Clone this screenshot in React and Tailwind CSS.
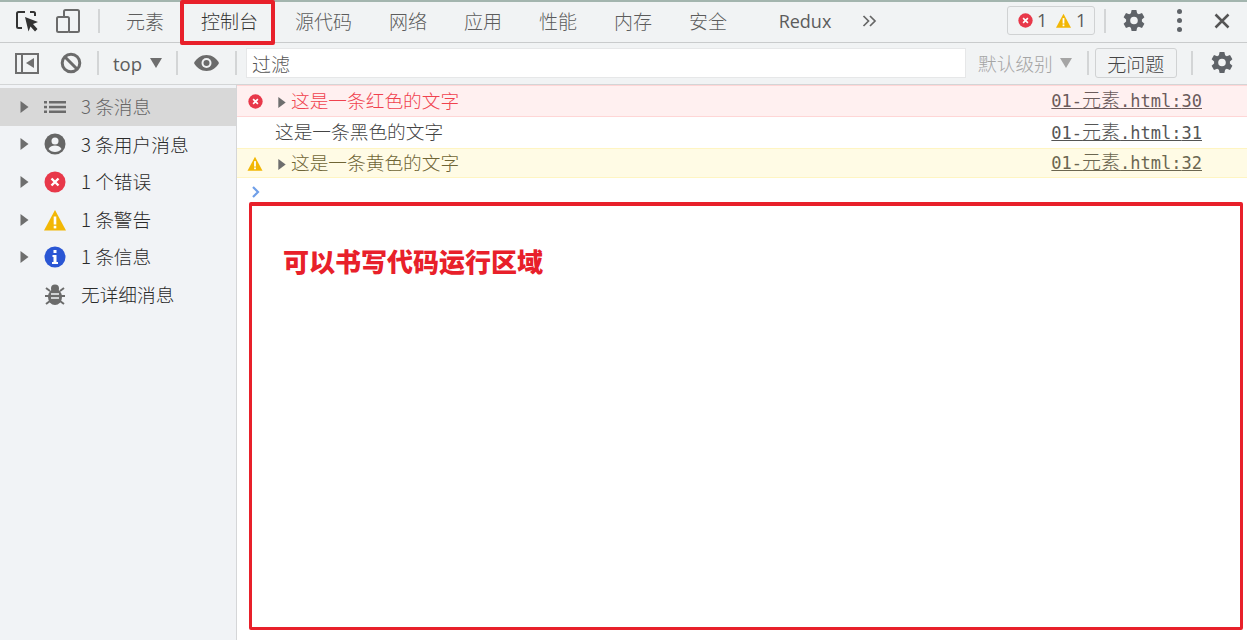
import React from "react";

const SANS = '"Noto Sans CJK SC","Noto Sans",sans-serif';

const Gear = ({ size = 24, color = "#5f6368" }) => (
  <svg width={size} height={size} viewBox="0 0 24 24" fill={color}>
    <path fillRule="evenodd" d="M9.600 1h4.800l.7 3.300 1.700.9 3.200-1.100 2.400 4.200-2.500 2.200v2l2.500 2.200-2.400 4.200-3.200-1.100-1.700.9-.7 3.300H9.600l-.7-3.300-1.700-.9-3.200 1.100L1.600 14.700l2.500-2.200v-2L1.600 8.300 4 4.100l3.200 1.100 1.700-.9L9.600 1zM12 7.700a3.800 3.800 0 1 0 0 7.600 3.800 3.800 0 0 0 0-7.600z" />
  </svg>
);

const ErrorIcon = ({ size = 22 }) => (
  <svg width={size} height={size} viewBox="0 0 22 22">
    <circle cx="11" cy="11" r="10.500" fill="#e8384a" />
    <path d="M7.500 7.500l7 7M14.500 7.500l-7 7" stroke="#fff" strokeWidth="2.400" />
  </svg>
);

const WarnIcon = ({ w = 22, h = 22 }) => (
  <svg width={w} height={h} viewBox="0 0 22 22">
    <path d="M11 1L22 21.500H0z" fill="#f2b705" />
    <rect x="9.700" y="7.500" width="2.600" height="8" fill="#fff" />
    <rect x="9.700" y="16.800" width="2.600" height="2.600" fill="#fff" />
  </svg>
);

const Caret = ({ color = "#6e6e6e", w = 8, h = 12 }) => (
  <svg width={w} height={h} viewBox="0 0 8 12"><path d="M0 0l8 6-8 6z" fill={color} /></svg>
);

const Down = ({ color = "#6e6e6e" }) => (
  <svg width="12" height="10" viewBox="0 0 12 10"><path d="M0 0h12L6 10z" fill={color} /></svg>
);

const Divider = ({ className = "" }) => <div className={`w-[2px] h-[24px] bg-[#d3d5d6] shrink-0 ${className}`} />;

const tabs = ["元素", "控制台", "源代码", "网络", "应用", "性能", "内存", "安全"];

const sideItems = [
  { label: "3 条消息", icon: "list", active: true },
  { label: "3 条用户消息", icon: "user" },
  { label: "1 个错误", icon: "error" },
  { label: "1 条警告", icon: "warn" },
  { label: "1 条信息", icon: "info" },
  { label: "无详细消息", icon: "bug", noCaret: true },
];

function SideIcon({ type }) {
  if (type === "list")
    return (
      <svg width="22" height="14" viewBox="0 0 22 14" fill="#6b6b6b">
        <rect x="0" y="1" width="3" height="2.500" /><rect x="5" y="1" width="17" height="2.500" />
        <rect x="0" y="5.800" width="3" height="2.500" /><rect x="5" y="5.800" width="17" height="2.500" />
        <rect x="0" y="10.500" width="3" height="2.500" /><rect x="5" y="10.500" width="17" height="2.500" />
      </svg>
    );
  if (type === "user")
    return (
      <svg width="22" height="22" viewBox="0 0 22 22">
        <circle cx="11" cy="11" r="10.500" fill="#666" />
        <circle cx="11" cy="8" r="3.500" fill="#f1f3f6" />
        <path d="M4.500 16c1.500-2.800 4-3.500 6.500-3.500s5 .7 6.500 3.500c-1.500 2-4 3-6.500 3s-5-1-6.500-3z" fill="#f1f3f6" />
      </svg>
    );
  if (type === "error") return <ErrorIcon />;
  if (type === "warn") return <WarnIcon />;
  if (type === "info")
    return (
      <svg width="22" height="22" viewBox="0 0 22 22">
        <circle cx="11" cy="11" r="10.500" fill="#2a56d4" />
        <rect x="9.500" y="4" width="3" height="3" fill="#fff" />
        <path d="M8.500 9h4v7h1.500v2h-6v-2h1.500v-5h-1z" fill="#fff" />
      </svg>
    );
  return (
    <svg width="20" height="22" viewBox="0 0 20 22" fill="#6b6b6b">
      <ellipse cx="10" cy="13" rx="7" ry="8" />
      <circle cx="10" cy="4.500" r="4" />
      <path d="M1 4l4 3M19 4l-4 3M0 12h4M20 12h-4M1 20l4-3M19 20l-4-3" stroke="#6b6b6b" strokeWidth="2" />
      <path d="M6 10h8M6 14h8" stroke="#f1f3f6" strokeWidth="1.600" />
    </svg>
  );
}

function Row({ className, textClass, linkClass, text, file, icon, caret }) {
  return (
    <div className={`flex items-center pl-[7px] pr-[45px] shrink-0 ${className}`}>
      <div className="w-[22px] flex justify-center shrink-0">{icon}</div>
      {caret ? (
        <div className="ml-[11px] w-[14px] shrink-0 flex pl-[1px] pt-[2px]"><Caret w={8} h={11} /></div>
      ) : (
        <div className="w-[9px] shrink-0" />
      )}
      <span className={`flex-1 text-[18.700px] font-light leading-[24px] pb-[3px] ${textClass}`}>{text}</span>
      <span
        className={`underline text-[17px] leading-[24px] pb-[1px] ${linkClass}`}
        style={{ fontFamily: '"DejaVu Sans Mono","Noto Sans CJK SC",monospace' }}
      >
        01-<span className="text-[19px] font-light">元素</span>.html:{file}
      </span>
    </div>
  );
}

export default function App() {
  return (
    <div className="relative w-[1247px] h-[640px] overflow-hidden bg-white flex flex-col" style={{ fontFamily: SANS }}>
      {/* top bar */}
      <div className="h-[43px] shrink-0 flex items-center pb-[3px] bg-[#f1f3f4] border-t-[2px] border-t-[#a3b5ae] border-b border-b-[#c9cbcc] text-[#5c5c5c] text-[19px]">
        <div className="w-[39px] flex justify-end shrink-0">
          <svg width="24" height="24" viewBox="0 0 24 24" fill="none">
            <path d="M10 3H3.500A1.500 1.500 0 0 0 2 4.500v13A1.500 1.500 0 0 0 3.500 19H7" stroke="#333" strokeWidth="2" />
            <path d="M15 3h3.500A1.500 1.500 0 0 1 20 4.500V7" stroke="#333" strokeWidth="2" />
            <path d="M10 8l13 5-5 2 4.500 5-2.500 2.500-4.500-5-2 5z" fill="#333" />
          </svg>
        </div>
        <div className="w-[42px] flex justify-end shrink-0">
          <svg width="26" height="26" viewBox="0 0 26 26" fill="none" stroke="#6b6b6b" strokeWidth="2">
            <path d="M9 9V3.500A1.500 1.500 0 0 1 10.500 2h12A1.500 1.500 0 0 1 24 3.500v19a1.500 1.500 0 0 1-1.500 1.500H14" />
            <rect x="2" y="9" width="12" height="15" rx="1.500" />
          </svg>
        </div>
        <Divider className="ml-[17px] mr-[7.500px]" />
        {tabs.map((t) => (
          <div key={t} className={`px-[18.500px] shrink-0 font-light leading-none ${t === "控制台" ? "text-[#333]" : ""}`}>{t}</div>
        ))}
        <div className="ml-[33px] text-[18px] font-normal leading-none" style={{ fontFamily: '"Open Sans",sans-serif' }}>Redux</div>
        <div className="ml-[31px] w-[16px] shrink-0">
          <svg width="15" height="12" viewBox="0 0 15 12" fill="none" stroke="#666" strokeWidth="1.700"><path d="M1.500 1l5 5-5 5M8 1l5 5-5 5" /></svg>
        </div>
        <div className="flex-1" />
        <div className="w-[88px] h-[29px] border border-[#d0d2d3] rounded-[3px] flex items-center pl-[10px] shrink-0 text-[18px] text-[#5a5a5a]" style={{ fontFamily: '"Open Sans",sans-serif' }}>
          <ErrorIcon size={15} />
          <span className="ml-[4px] w-[19px]">1</span>
          <WarnIcon w={15} h={15} />
          <span className="ml-[5px]">1</span>
        </div>
        <Divider className="ml-[9px] mr-[16px]" />
        <Gear />
        <div className="ml-[31px] mr-[32px] flex flex-col gap-[4px] shrink-0">
          <div className="w-[5px] h-[5px] rounded-full bg-[#5f6368]" />
          <div className="w-[5px] h-[5px] rounded-full bg-[#5f6368]" />
          <div className="w-[5px] h-[5px] rounded-full bg-[#5f6368]" />
        </div>
        <svg className="mr-[17px] shrink-0" width="16" height="16" viewBox="0 0 16 16" stroke="#555" strokeWidth="2.500"><path d="M1.500 1.500l13 13M14.500 1.500l-13 13" /></svg>
      </div>

      {/* second bar */}
      <div className="h-[42px] shrink-0 flex items-center pb-[1px] bg-[#f1f3f4] border-b border-b-[#d3d5d6] text-[#5c5c5c]">
        <div className="ml-[15px] w-[24px] h-[21px] border-[2px] border-[#6e6e6e] flex items-center shrink-0">
          <div className="w-[6px] h-full border-r-[2px] border-[#6e6e6e] shrink-0" />
          <svg className="ml-[3px]" width="8" height="10" viewBox="0 0 8 10"><path d="M8 0v10L0 5z" fill="#6e6e6e" /></svg>
        </div>
        <svg className="ml-[21px] shrink-0" width="22" height="22" viewBox="0 0 22 22" fill="none" stroke="#6b6b6b" strokeWidth="3">
          <circle cx="11" cy="11" r="8.800" /><path d="M5 5l12 12" />
        </svg>
        <Divider className="ml-[15px]" />
        <span className="ml-[14px] text-[18.500px] leading-none pt-[2px]" style={{ fontFamily: '"Open Sans",sans-serif' }}>top</span>
        <div className="ml-[8px] shrink-0"><Down /></div>
        <Divider className="ml-[14px]" />
        <svg className="ml-[16px] shrink-0" width="25" height="16" viewBox="0 0 25 16">
          <path d="M12.500 0C7 0 2.500 3.300 0 8c2.500 4.700 7 8 12.500 8S22.500 12.700 25 8C22.500 3.300 18 0 12.500 0z" fill="#6b6b6b" />
          <circle cx="12.500" cy="8" r="5" fill="#f1f3f4" /><circle cx="12.500" cy="8" r="3" fill="#6b6b6b" />
        </svg>
        <Divider className="ml-[16px]" />
        <div className="ml-[9px] w-[720px] h-[30px] bg-white border border-[#e6e7e8] flex items-center pl-[5px] pt-[2px] text-[19px] text-[#555] font-light shrink-0">过滤</div>
        <span className="ml-[12px] text-[18.700px] font-light text-[#a5a5a5] leading-none pt-[1px] shrink-0">默认级别</span>
        <div className="ml-[7px] shrink-0"><Down color="#a5a5a5" /></div>
        <Divider className="ml-[15px]" />
        <div className="ml-[6px] w-[82px] h-[30px] border border-[#d0d2d3] rounded-[3px] flex items-center justify-center pt-[2px] text-[19px] text-[#444] font-light shrink-0">无问题</div>
        <Divider className="ml-[14px]" />
        <div className="ml-[17px] shrink-0"><Gear /></div>
      </div>

      <div className="flex-1 flex min-h-0">
        {/* sidebar */}
        <div className="w-[237px] shrink-0 bg-[#f1f3f6] border-r border-r-[#d5d6d8] pt-[3px] text-[18.700px] font-light text-[#2a2a2a]">
          {sideItems.map((it) => (
            <div key={it.label} className={`h-[37.600px] flex items-center pl-[20px] ${it.active ? "bg-[#d8d8d8] text-[#666]" : ""}`}>
              <div className="w-[24px] shrink-0">{!it.noCaret && <Caret w={9} h={12} />}</div>
              <div className="w-[37px] shrink-0 flex justify-center pr-[15px]"><SideIcon type={it.icon} /></div>
              <span className="leading-none pb-[1px]">{it.label}</span>
            </div>
          ))}
        </div>

        {/* console */}
        <div className="flex-1 min-w-0 flex flex-col bg-white">
          <Row
            className="h-[32px] bg-[#fff0f0] border-y border-y-[#ffd6d6]"
            textClass="text-[#f0424e]" linkClass="text-[#6b5b5b]"
            text="这是一条红色的文字" file="30" caret icon={<ErrorIcon size={15} />}
          />
          <Row
            className="h-[31px]"
            textClass="text-[#444]" linkClass="text-[#555]"
            text="这是一条黑色的文字" file="31"
          />
          <Row
            className="h-[30px] bg-[#fffbe5] border-y border-y-[#fff5c2]"
            textClass="text-[#6f6535]" linkClass="text-[#6b6650]"
            text="这是一条黄色的文字" file="32" caret icon={<WarnIcon w={16} h={15} />}
          />
          <div className="h-[24px] pl-[14px] pt-[4px] flex items-center shrink-0">
            <svg width="10" height="12" viewBox="0 0 10 12" fill="none" stroke="#6f9fe8" strokeWidth="2.200"><path d="M2 1l5 5-5 5" /></svg>
          </div>
          {/* annotation box */}
          <div className="ml-[12px] mr-[4px] h-[428px] border-[3px] border-t-[4px] border-[#e8202a] rounded-[2px] pl-[31px] pt-[42px] shrink-0">
            <span className="text-[26px] font-black text-[#e8202a] leading-none">可以书写代码运行区域</span>
          </div>
        </div>
      </div>

      {/* tab annotation overlay */}
      <div className="absolute left-[180px] top-0 w-[95px] h-[45px] border-[4px] border-[#e8202a] rounded-[2px]" />
    </div>
  );
}
